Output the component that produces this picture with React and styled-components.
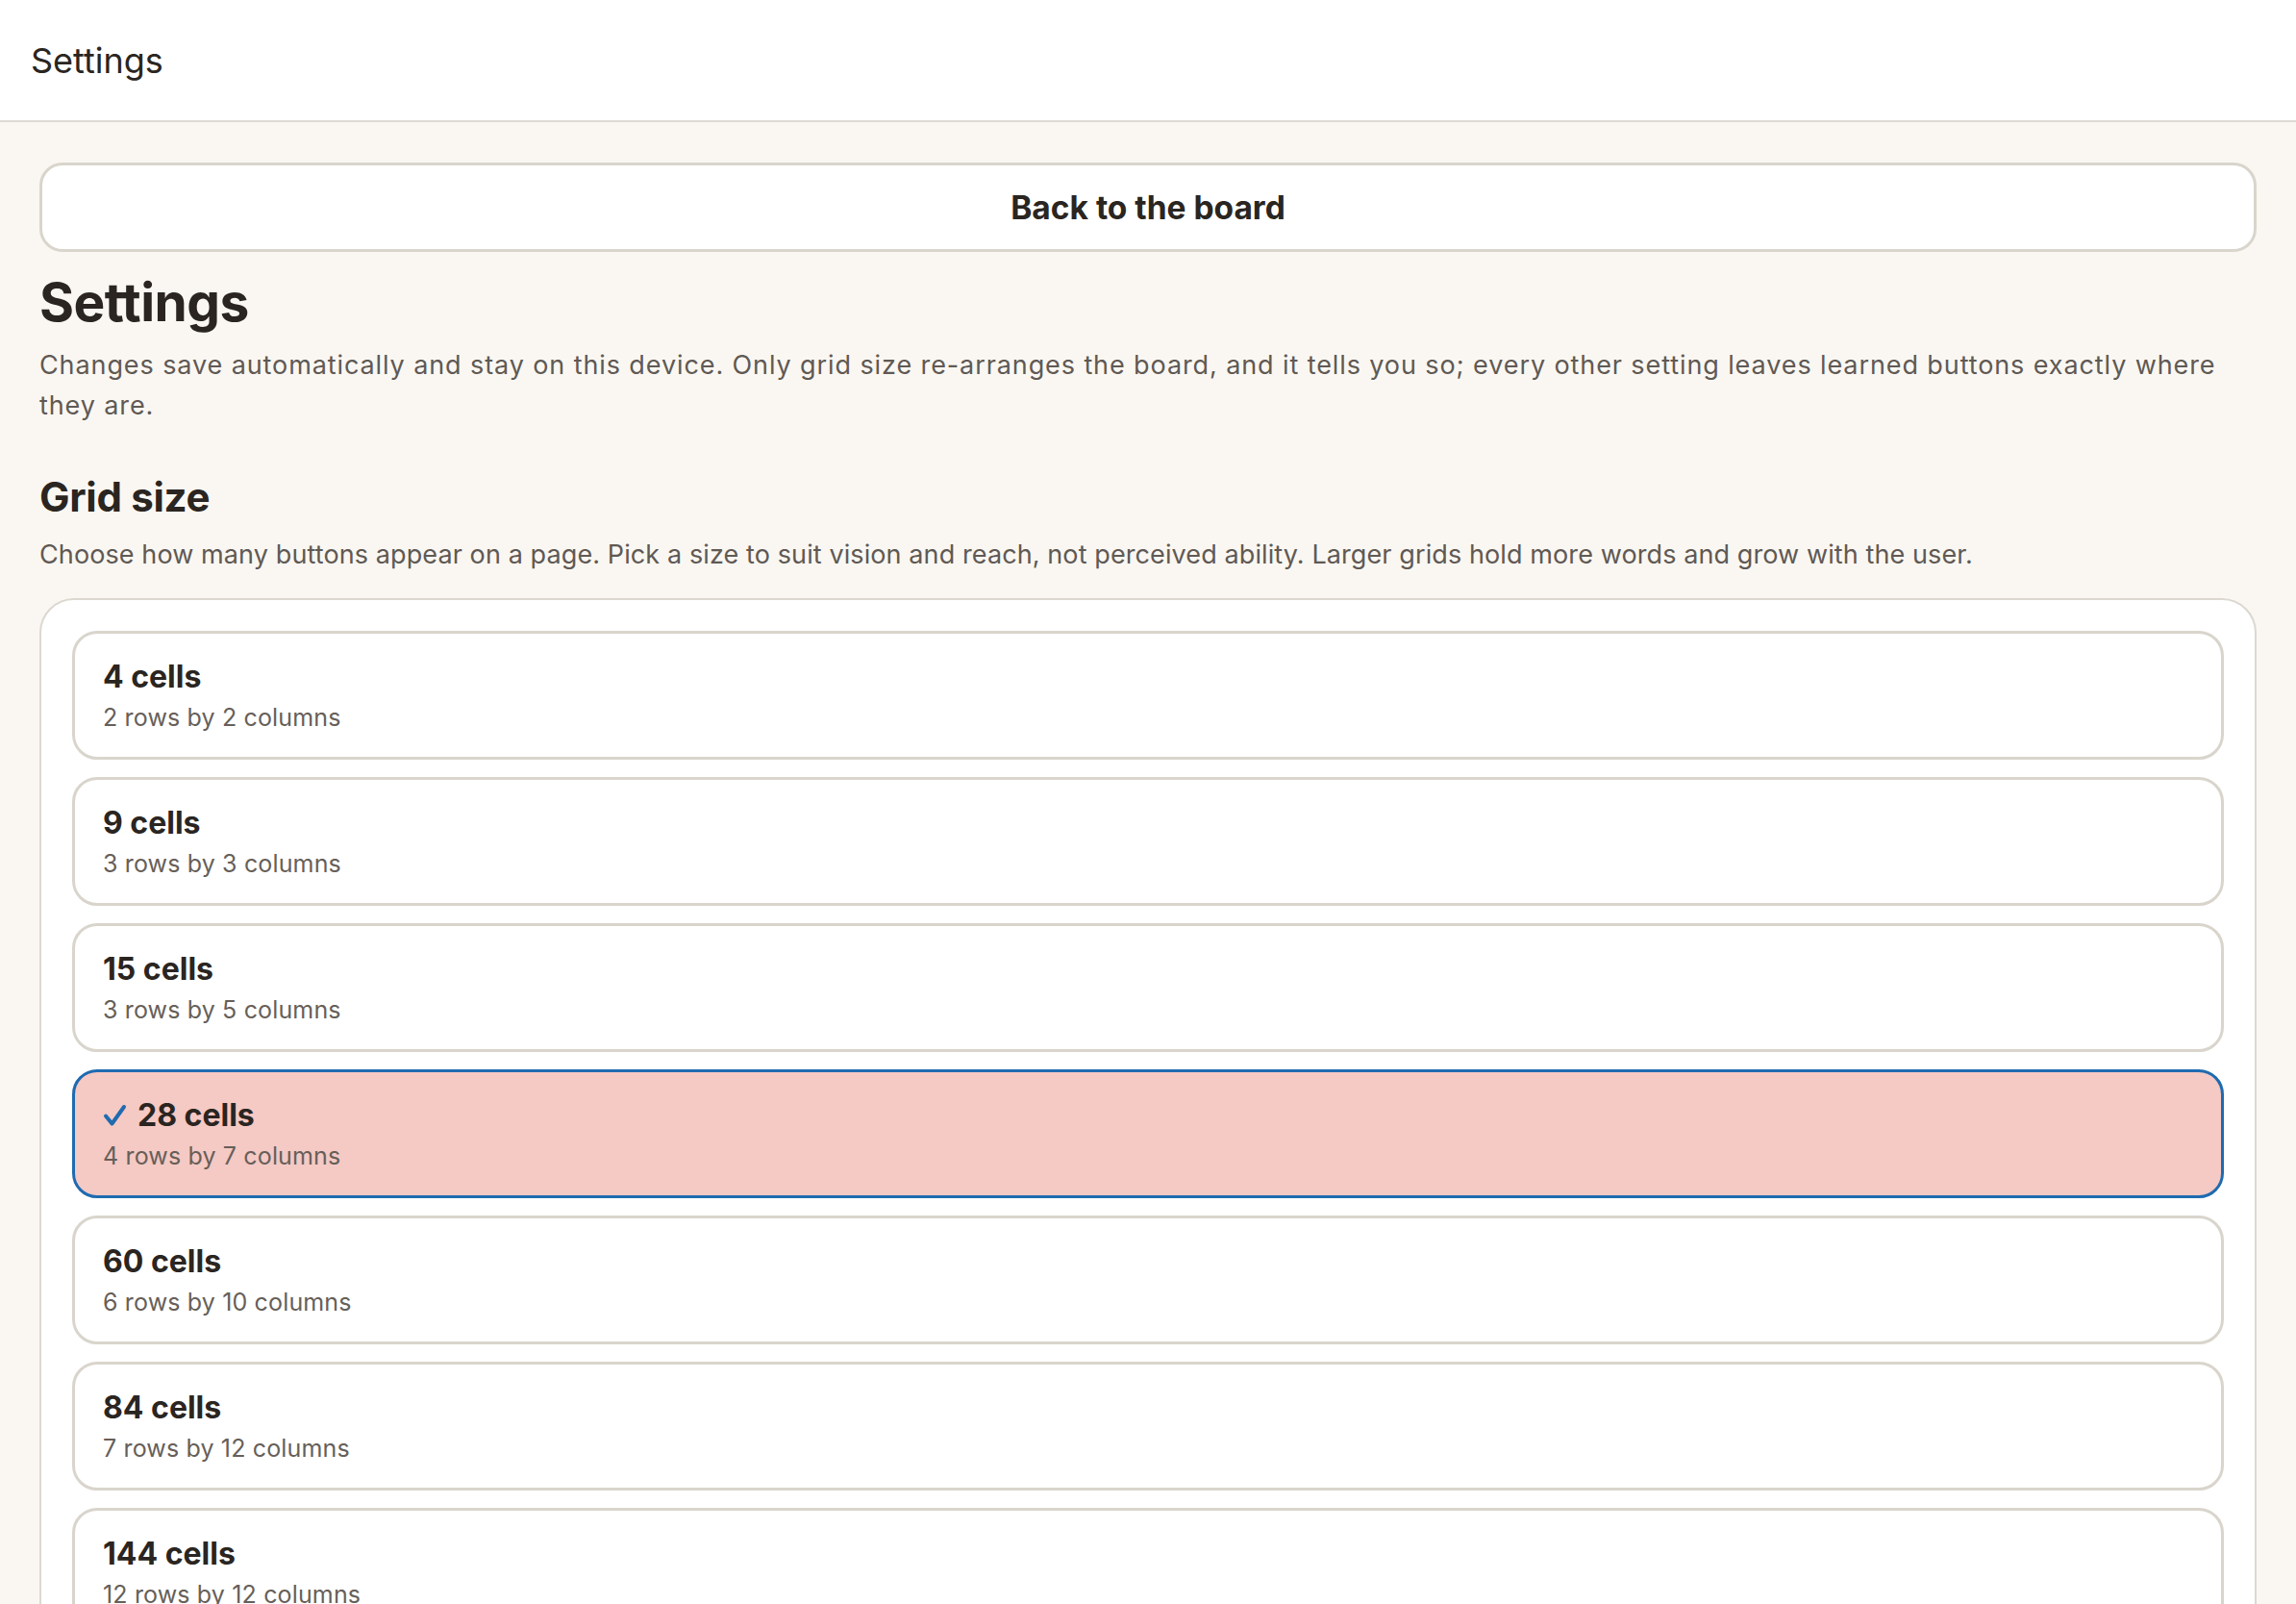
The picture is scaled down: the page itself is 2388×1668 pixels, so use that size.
import React from 'react';
import styled, { createGlobalStyle } from 'styled-components';

const GlobalStyle = createGlobalStyle`
    * { box-sizing: border-box; }
    body {
        margin: 0;
        background: #faf7f2;
        font-family: Inter, "Noto Sans", sans-serif;
        color: #2a2521;
    }
`

const TopBar = styled.header`
    height: 127px;
    background: #ffffff;
    border-bottom: 2px solid #dedbd5;
    display: flex;
    align-items: center;
    padding: 0 32px;
    font-size: 36px;
    color: #2a2521;
`

const Main = styled.main`
    padding: 42px 41px 0;
`

const BackButton = styled.button`
    width: 100%;
    height: 93px;
    background: #ffffff;
    border: 3px solid #d9d5cc;
    border-radius: 24px;
    font-family: inherit;
    font-size: 33.5px;
    font-weight: 700;
    color: #2a2521;
    cursor: pointer;
`

const Title = styled.h1`
    margin: 19px 0 0;
    font-size: 55px;
    line-height: 1.2;
    font-weight: 700;
    letter-spacing: -0.5px;
`

const Lead = styled.p`
    margin: ${p => p.$top || 12}px 0 0;
    font-size: 27px;
    line-height: 42px;
    letter-spacing: ${p => p.$spacing || 0}px;
    color: #605954;
`

const SectionTitle = styled.h2`
    margin: 49px 0 0;
    font-size: 42px;
    line-height: 1.2;
    font-weight: 700;
    letter-spacing: -0.3px;
`

const OptionList = styled.div`
    margin-top: 24px;
    background: #ffffff;
    border: 2px solid #dcd8d0;
    border-radius: 36px;
    padding: 32px;
    display: flex;
    flex-direction: column;
    gap: 18px;
`

const Option = styled.button`
    display: flex;
    flex-direction: column;
    align-items: flex-start;
    gap: 4px;
    width: 100%;
    height: 134px;
    padding: 25px 29px 23px;
    text-align: left;
    font-family: inherit;
    background: ${p => (p.$selected ? '#f5c9c4' : '#ffffff')};
    border: 3px solid ${p => (p.$selected ? '#1f6bb0' : '#d9d5cc')};
    border-radius: 26px;
    cursor: pointer;
`

const OptionTitle = styled.span`
    display: flex;
    align-items: center;
    gap: 11px;
    font-size: 32px;
    line-height: 40px;
    font-weight: 700;
    color: #2a2521;
`

const OptionSub = styled.span`
    font-size: 25px;
    line-height: 36px;
    letter-spacing: 0.15px;
    color: #675f59;
`

const Check = () => (
    <svg width="25" height="24" viewBox="0 0 25 24" fill="none">
        <path d="M3 12.5 L9.5 20.5 L22 3" stroke="#1f6bb0" strokeWidth="4" strokeLinecap="round" strokeLinejoin="round" />
    </svg>
)

const sizes = [
    { cells: 4, rows: 2, cols: 2 },
    { cells: 9, rows: 3, cols: 3 },
    { cells: 15, rows: 3, cols: 5 },
    { cells: 28, rows: 4, cols: 7 },
    { cells: 60, rows: 6, cols: 10 },
    { cells: 84, rows: 7, cols: 12 },
    { cells: 144, rows: 12, cols: 12 },
]

const App = () => {
    const selected = 28;
    return (
        <div>
            <GlobalStyle />
            <TopBar>Settings</TopBar>
            <Main>
                <BackButton>Back to the board</BackButton>
                <Title>Settings</Title>
                <Lead $spacing={0.9}>
                    Changes save automatically and stay on this device. Only grid size re-arranges the board, and it tells you so; every other setting leaves learned buttons exactly where they are.
                </Lead>
                <SectionTitle>Grid size</SectionTitle>
                <Lead $top={14} $spacing={0.1}>
                    Choose how many buttons appear on a page. Pick a size to suit vision and reach, not perceived ability. Larger grids hold more words and grow with the user.
                </Lead>
                <OptionList>
                    {sizes.map(s => (
                        <Option key={s.cells} $selected={s.cells === selected}>
                            <OptionTitle>
                                {s.cells === selected && <Check />}
                                {s.cells} cells
                            </OptionTitle>
                            <OptionSub>{s.rows} rows by {s.cols} columns</OptionSub>
                        </Option>
                    ))}
                </OptionList>
            </Main>
        </div>
    );
}

export default App;
